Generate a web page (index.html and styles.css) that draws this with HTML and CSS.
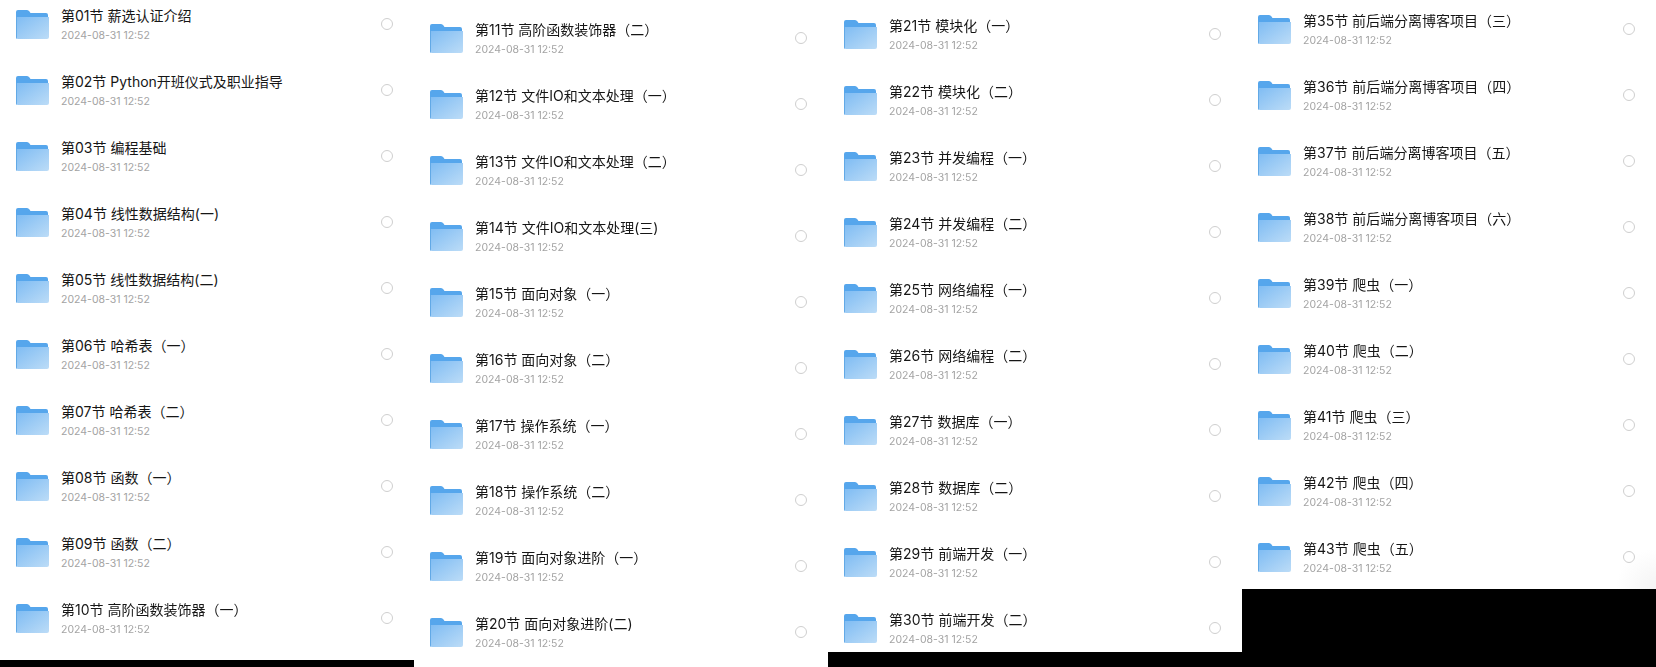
FILE: index.html
```html
<!DOCTYPE html>
<html lang="zh-CN">
<head>
  <meta charset="UTF-8">
  <title>Files</title>
  <link rel="stylesheet" href="styles.css">
</head>
<body>
  <!-- Shared folder icon -->
  <svg class="defs" width="0" height="0">
    <defs>
      <linearGradient id="folderFront" x1="0" y1="0" x2="1" y2="1">
        <stop offset="0" stop-color="#7fbcf3"/>
        <stop offset="1" stop-color="#bcdcf7"/>
      </linearGradient>
      <symbol id="folder" viewBox="0 0 33 29">
        <path d="M0 2q0-2 2-2h9q1.500 0 2.500 1.500l1 1.500h15.500q2 0 2 2v6H0z" fill="#56a6ec"/>
        <path d="M0 7h33v20q0 2-2 2H2q-2 0-2-2z" fill="url(#folderFront)"/>
        <path d="M0 7h1v22q-1-.5-1-2z" fill="#62a9e6"/>
      </symbol>
    </defs>
  </svg>

  <div class="columns">
    <!-- Column 1 -->
    <ul class="file-list col-1">
      <li class="file-row"><svg class="folder"><use href="#folder"/></svg><div class="file-info"><div class="file-name">第01节 薪选认证介绍</div><div class="file-date">2024-08-31 12:52</div></div><span class="radio"></span></li>
      <li class="file-row"><svg class="folder"><use href="#folder"/></svg><div class="file-info"><div class="file-name">第02节 Python开班仪式及职业指导</div><div class="file-date">2024-08-31 12:52</div></div><span class="radio"></span></li>
      <li class="file-row"><svg class="folder"><use href="#folder"/></svg><div class="file-info"><div class="file-name">第03节 编程基础</div><div class="file-date">2024-08-31 12:52</div></div><span class="radio"></span></li>
      <li class="file-row"><svg class="folder"><use href="#folder"/></svg><div class="file-info"><div class="file-name">第04节 线性数据结构(一)</div><div class="file-date">2024-08-31 12:52</div></div><span class="radio"></span></li>
      <li class="file-row"><svg class="folder"><use href="#folder"/></svg><div class="file-info"><div class="file-name">第05节 线性数据结构(二)</div><div class="file-date">2024-08-31 12:52</div></div><span class="radio"></span></li>
      <li class="file-row"><svg class="folder"><use href="#folder"/></svg><div class="file-info"><div class="file-name">第06节 哈希表（一）</div><div class="file-date">2024-08-31 12:52</div></div><span class="radio"></span></li>
      <li class="file-row"><svg class="folder"><use href="#folder"/></svg><div class="file-info"><div class="file-name">第07节 哈希表（二）</div><div class="file-date">2024-08-31 12:52</div></div><span class="radio"></span></li>
      <li class="file-row"><svg class="folder"><use href="#folder"/></svg><div class="file-info"><div class="file-name">第08节 函数（一）</div><div class="file-date">2024-08-31 12:52</div></div><span class="radio"></span></li>
      <li class="file-row"><svg class="folder"><use href="#folder"/></svg><div class="file-info"><div class="file-name">第09节 函数（二）</div><div class="file-date">2024-08-31 12:52</div></div><span class="radio"></span></li>
      <li class="file-row"><svg class="folder"><use href="#folder"/></svg><div class="file-info"><div class="file-name">第10节 高阶函数装饰器（一）</div><div class="file-date">2024-08-31 12:52</div></div><span class="radio"></span></li>
    </ul>

    <!-- Column 2 -->
    <ul class="file-list col-2">
      <li class="file-row"><svg class="folder"><use href="#folder"/></svg><div class="file-info"><div class="file-name">第11节 高阶函数装饰器（二）</div><div class="file-date">2024-08-31 12:52</div></div><span class="radio"></span></li>
      <li class="file-row"><svg class="folder"><use href="#folder"/></svg><div class="file-info"><div class="file-name">第12节 文件IO和文本处理（一）</div><div class="file-date">2024-08-31 12:52</div></div><span class="radio"></span></li>
      <li class="file-row"><svg class="folder"><use href="#folder"/></svg><div class="file-info"><div class="file-name">第13节 文件IO和文本处理（二）</div><div class="file-date">2024-08-31 12:52</div></div><span class="radio"></span></li>
      <li class="file-row"><svg class="folder"><use href="#folder"/></svg><div class="file-info"><div class="file-name">第14节 文件IO和文本处理(三)</div><div class="file-date">2024-08-31 12:52</div></div><span class="radio"></span></li>
      <li class="file-row"><svg class="folder"><use href="#folder"/></svg><div class="file-info"><div class="file-name">第15节 面向对象（一）</div><div class="file-date">2024-08-31 12:52</div></div><span class="radio"></span></li>
      <li class="file-row"><svg class="folder"><use href="#folder"/></svg><div class="file-info"><div class="file-name">第16节 面向对象（二）</div><div class="file-date">2024-08-31 12:52</div></div><span class="radio"></span></li>
      <li class="file-row"><svg class="folder"><use href="#folder"/></svg><div class="file-info"><div class="file-name">第17节 操作系统（一）</div><div class="file-date">2024-08-31 12:52</div></div><span class="radio"></span></li>
      <li class="file-row"><svg class="folder"><use href="#folder"/></svg><div class="file-info"><div class="file-name">第18节 操作系统（二）</div><div class="file-date">2024-08-31 12:52</div></div><span class="radio"></span></li>
      <li class="file-row"><svg class="folder"><use href="#folder"/></svg><div class="file-info"><div class="file-name">第19节 面向对象进阶（一）</div><div class="file-date">2024-08-31 12:52</div></div><span class="radio"></span></li>
      <li class="file-row"><svg class="folder"><use href="#folder"/></svg><div class="file-info"><div class="file-name">第20节 面向对象进阶(二)</div><div class="file-date">2024-08-31 12:52</div></div><span class="radio"></span></li>
    </ul>

    <!-- Column 3 -->
    <ul class="file-list col-3">
      <li class="file-row"><svg class="folder"><use href="#folder"/></svg><div class="file-info"><div class="file-name">第21节 模块化（一）</div><div class="file-date">2024-08-31 12:52</div></div><span class="radio"></span></li>
      <li class="file-row"><svg class="folder"><use href="#folder"/></svg><div class="file-info"><div class="file-name">第22节 模块化（二）</div><div class="file-date">2024-08-31 12:52</div></div><span class="radio"></span></li>
      <li class="file-row"><svg class="folder"><use href="#folder"/></svg><div class="file-info"><div class="file-name">第23节 并发编程（一）</div><div class="file-date">2024-08-31 12:52</div></div><span class="radio"></span></li>
      <li class="file-row"><svg class="folder"><use href="#folder"/></svg><div class="file-info"><div class="file-name">第24节 并发编程（二）</div><div class="file-date">2024-08-31 12:52</div></div><span class="radio"></span></li>
      <li class="file-row"><svg class="folder"><use href="#folder"/></svg><div class="file-info"><div class="file-name">第25节 网络编程（一）</div><div class="file-date">2024-08-31 12:52</div></div><span class="radio"></span></li>
      <li class="file-row"><svg class="folder"><use href="#folder"/></svg><div class="file-info"><div class="file-name">第26节 网络编程（二）</div><div class="file-date">2024-08-31 12:52</div></div><span class="radio"></span></li>
      <li class="file-row"><svg class="folder"><use href="#folder"/></svg><div class="file-info"><div class="file-name">第27节 数据库（一）</div><div class="file-date">2024-08-31 12:52</div></div><span class="radio"></span></li>
      <li class="file-row"><svg class="folder"><use href="#folder"/></svg><div class="file-info"><div class="file-name">第28节 数据库（二）</div><div class="file-date">2024-08-31 12:52</div></div><span class="radio"></span></li>
      <li class="file-row"><svg class="folder"><use href="#folder"/></svg><div class="file-info"><div class="file-name">第29节 前端开发（一）</div><div class="file-date">2024-08-31 12:52</div></div><span class="radio"></span></li>
      <li class="file-row"><svg class="folder"><use href="#folder"/></svg><div class="file-info"><div class="file-name">第30节 前端开发（二）</div><div class="file-date">2024-08-31 12:52</div></div><span class="radio"></span></li>
    </ul>

    <!-- Column 4 -->
    <ul class="file-list col-4">
      <li class="file-row"><svg class="folder"><use href="#folder"/></svg><div class="file-info"><div class="file-name">第35节 前后端分离博客项目（三）</div><div class="file-date">2024-08-31 12:52</div></div><span class="radio"></span></li>
      <li class="file-row"><svg class="folder"><use href="#folder"/></svg><div class="file-info"><div class="file-name">第36节 前后端分离博客项目（四）</div><div class="file-date">2024-08-31 12:52</div></div><span class="radio"></span></li>
      <li class="file-row"><svg class="folder"><use href="#folder"/></svg><div class="file-info"><div class="file-name">第37节 前后端分离博客项目（五）</div><div class="file-date">2024-08-31 12:52</div></div><span class="radio"></span></li>
      <li class="file-row"><svg class="folder"><use href="#folder"/></svg><div class="file-info"><div class="file-name">第38节 前后端分离博客项目（六）</div><div class="file-date">2024-08-31 12:52</div></div><span class="radio"></span></li>
      <li class="file-row"><svg class="folder"><use href="#folder"/></svg><div class="file-info"><div class="file-name">第39节 爬虫（一）</div><div class="file-date">2024-08-31 12:52</div></div><span class="radio"></span></li>
      <li class="file-row"><svg class="folder"><use href="#folder"/></svg><div class="file-info"><div class="file-name">第40节 爬虫（二）</div><div class="file-date">2024-08-31 12:52</div></div><span class="radio"></span></li>
      <li class="file-row"><svg class="folder"><use href="#folder"/></svg><div class="file-info"><div class="file-name">第41节 爬虫（三）</div><div class="file-date">2024-08-31 12:52</div></div><span class="radio"></span></li>
      <li class="file-row"><svg class="folder"><use href="#folder"/></svg><div class="file-info"><div class="file-name">第42节 爬虫（四）</div><div class="file-date">2024-08-31 12:52</div></div><span class="radio"></span></li>
      <li class="file-row"><svg class="folder"><use href="#folder"/></svg><div class="file-info"><div class="file-name">第43节 爬虫（五）</div><div class="file-date">2024-08-31 12:52</div></div><span class="radio"></span></li>
    </ul>
  </div>
</body>
</html>
```

FILE: styles.css
```css
/* Global Styles */
html, body {
  height: 100%;
}

body {
  margin: 0;
  background: #000;
  font-family: 'Inter', 'Noto Sans CJK SC', sans-serif;
  overflow: hidden;
}

.defs {
  position: absolute;
}

/* Four screenshots side by side, each cut at its own height */
.columns {
  display: grid;
  grid-template-columns: repeat(4, 414px);
  align-items: start;
  filter: blur(0.35px); /* the source is a soft jpeg */
}

.file-list {
  list-style: none;
  margin: 0;
  background: #fff;
  display: flex;
  flex-direction: column;
  gap: 18px;
  padding: 0 21px 0 16px;
}

.col-1 { padding-top: 0; padding-bottom: 18px; }
.col-2 { padding-top: 14px; padding-bottom: 11px; }
.col-3 { padding-top: 10px; padding-bottom: 0; }
.col-4 {
  padding-top: 5px;
  padding-bottom: 8px;
  background: radial-gradient(circle at 100% 100%, #f4f4f4 0, #fff 40px);
}

/* Row */
.file-row {
  height: 48px;
  display: flex;
  align-items: center;
}

.folder {
  width: 33px;
  height: 29px;
  flex: none;
  margin-right: 12px;
}

.file-info {
  flex: 1;
  align-self: flex-start;
  padding-top: 7px;
}

.file-name {
  font-size: 14px;
  line-height: 18px;
  color: #161616;
}

.file-date {
  font-size: 10.5px;
  line-height: 14px;
  margin-top: 4px;
  color: #a3a3a3;
}

.radio {
  width: 12px;
  height: 12px;
  flex: none;
  box-sizing: border-box;
  border: 1.5px solid #cfcfcf;
  border-radius: 50%;
}
```
